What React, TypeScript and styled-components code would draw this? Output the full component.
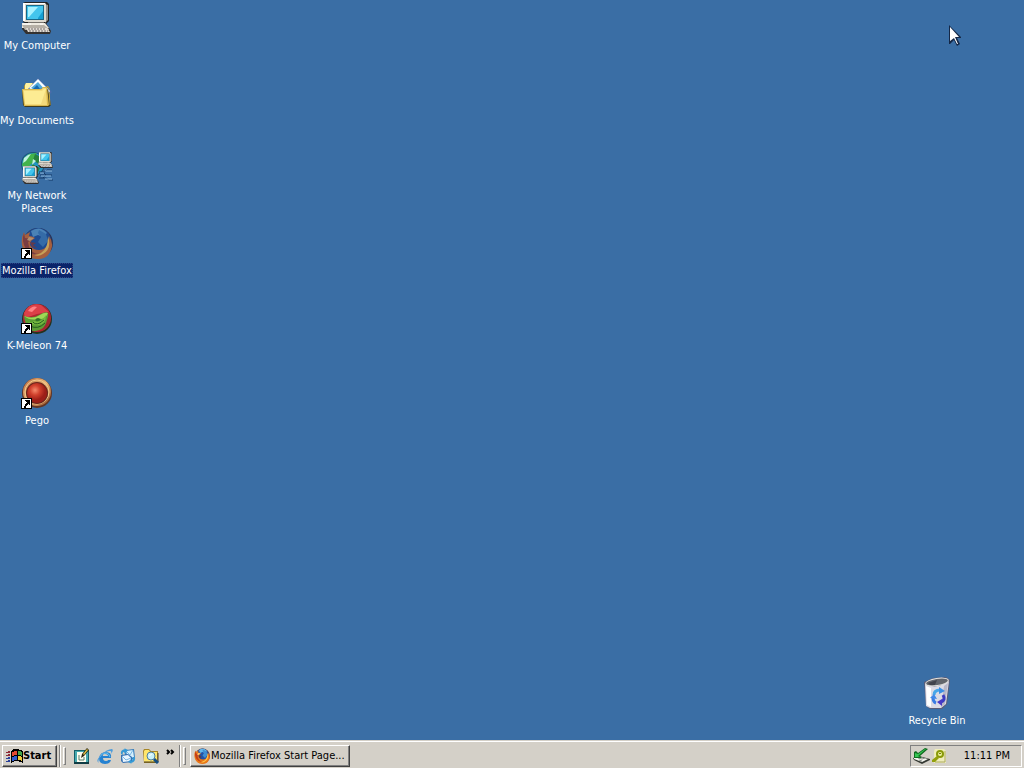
import React from "react";
import styled, { createGlobalStyle, css } from "styled-components";

const face = "#d4d0c8";
const shadow = "#808080";

const GlobalStyle = createGlobalStyle`
  * { box-sizing: border-box; }
  html, body { margin: 0; padding: 0; }
  body {
    font-family: "DejaVu Sans Condensed", "DejaVu Sans", sans-serif;
    font-size: 11px;
    line-height: 13px;
    color: #000;
    background: #3a6ea5;
    overflow: hidden;
  }
`;

const Screen = styled.div`
  position: relative;
  display: flex;
  flex-direction: column;
  height: 100vh;
`;

const Desktop = styled.main`
  flex: 1;
  display: flex;
  justify-content: space-between;
  min-height: 0;
  padding-right: 50px;
`;

const IconColumn = styled.nav`
  display: grid;
  grid-auto-rows: 75px;
  align-content: start;
`;

const BinCorner = styled.div`
  align-self: flex-end;
  padding-bottom: 12px;
`;

const DesktopIcon = styled.button`
  display: flex;
  flex-direction: column;
  align-items: center;
  justify-content: flex-start;
  gap: 4px;
  width: 74px;
  padding: 2px 0 0;
  border: 0;
  background: none;
  font: inherit;
  color: #fff;
`;

const IconLabel = styled.span<{ $selected?: boolean }>`
  padding: 1px;
  white-space: pre;
  text-align: center;
  ${({ $selected }) => $selected && css`
    background: #0a246a;
    outline: 1px dotted #2c4484;
    outline-offset: -1px;
  `}
`;

const Taskbar = styled.footer`
  display: flex;
  align-items: center;
  height: 28px;
  padding: 2px 2px 0;
  background: ${face};
  border-top: 1px solid ${face};
  box-shadow: inset 0 1px #fff;
`;

const raised = css`
  border: 1px solid;
  border-color: #fff #404040 #404040 #fff;
  box-shadow: inset -1px -1px ${shadow};
`;

const BarButton = styled.button<{ $wide?: boolean }>`
  display: flex;
  align-items: center;
  gap: ${({ $wide }) => ($wide ? 1 : 0)}px;
  width: ${({ $wide }) => ($wide ? 160 : 55)}px;
  height: 22px;
  padding: 0 3px;
  background: ${face};
  color: #000;
  font: inherit;
  font-weight: ${({ $wide }) => ($wide ? 400 : 700)};
  white-space: nowrap;
  ${raised}
`;

const Divider = styled.span`
  width: 2px;
  height: 22px;
  border-left: 1px solid ${shadow};
  border-right: 1px solid #fff;
`;

const Grip = styled.span`
  width: 3px;
  height: 18px;
  margin: 0 4px 0 2px;
  border: 1px solid;
  border-color: #fff ${shadow} ${shadow} #fff;
`;

const QuickLaunch = styled.div`
  display: flex;
  align-items: center;
  gap: 7px;
  padding: 0 4px;
`;

const ToolButton = styled.button`
  display: flex;
  padding: 0;
  border: 0;
  background: none;
`;

const MoreButton = styled(ToolButton)`
  align-self: flex-start;
  margin: 6px 2px 0 0;
`;

const StartArea = styled.div`
  padding-right: 2px;
`;

const Tray = styled.div`
  display: flex;
  align-items: center;
  gap: 2px;
  height: 22px;
  margin-left: auto;
  padding: 0 11px 0 2px;
  border: 1px solid;
  border-color: ${shadow} #fff #fff ${shadow};
`;

const Clock = styled.time`
  padding-left: 16px;
  white-space: nowrap;
`;

const Pointer = styled.svg`
  position: absolute;
  top: 25px;
  right: 63px;
  pointer-events: none;
`;

function Shortcut() {
  return (
    <g shapeRendering="crispEdges">
      <path d="M0 21h11v11H0z" fill="#000" />
      <path d="M1 22h9v9H1z" fill="#fff" />
      <path d="M4 23h5v5H8v-1H7v1H6v1H5v2H3v-2h1v-2h1v-1h1v-1H5v-1H4z" fill="#000" />
    </g>
  );
}

function PcShape() {
  return (
    <g>
      <path d="M2 1l2-1h22l2 2v17l-3 3H5l-3-2z" fill="#222" />
      <path d="M24 2l3 1v15l-3 3z" fill="#938f88" />
      <path d="M2 1h22l1 1v18H4l-2-1z" fill="#ddd9cf" />
      <path d="M2 1h22v1H4v17H2z" fill="#fff" />
      <path d="M5 3h18v15H5z" fill="#186888" />
      <path d="M6 4h16v13H6z" fill="#43c5ed" />
      <path d="M7 5h10L8 15H7z" fill="#a8f2ff" />
      <path d="M17 16l5-7v8h-5z" fill="#159fd3" />
      <path d="M7 20h16v3H7z" fill="#77736d" />
      <path d="M1 21h24l5 8-1 3H5l-4-5z" fill="#34312f" />
      <path d="M1 21h23l4 5H1z" fill="#eeeae0" />
      <path d="M1 23h22l5 4v1H4z" fill="#b6b0a6" />
      <path d="M5 26h21l3 4H7z" fill="#e1dcd4" />
      <path d="M7 27h18M8 29h19" stroke="#746d6c" strokeDasharray="2 1" />
      <path d="M2 22h8M19 22h3" stroke="#fff" />
    </g>
  );
}

function ComputerIcon() {
  return <svg width="32" height="32" viewBox="0 0 32 32"><PcShape /></svg>;
}

function DocumentsIcon() {
  return (
    <svg width="32" height="32" viewBox="0 0 32 32">
      <path d="M3 9l2-3h7l2 3h13l2 3v17H4z" fill="#b79832" />
      <path d="M4 8l1-2h6l2 3v6H4z" fill="#fff2a0" />
      <path d="M7 12L17 1l14 14-6 6z" fill="#496caa" />
      <path d="M8 11l9-9 12 12-5 6z" fill="#f8fdff" />
      <path d="M10 11l7-6 8 9-3 3z" fill="#50a8db" />
      <path d="M12 12l4-4 3 4 2-1 3 3-3 2z" fill="#1669ae" />
      <path d="M1 13h24l2-1 3 16-2 2H4l-2-2z" fill="#413b1b" />
      <path d="M1 12h19l2-2h4l2 18-1 1H3z" fill="#d9b84d" />
      <path d="M2 13h18l2-2h3l1 17H4z" fill="#f4da7b" />
      <path d="M3 14h18l2-2h2l-5 15H4z" fill="#fff09a" opacity=".8" />
      <path d="M28 15l1 13" stroke="#c8a947" />
    </svg>
  );
}

function NetworkIcon() {
  return (
    <svg width="32" height="32" viewBox="0 0 32 32">
      <circle cx="12" cy="12" r="12" fill="#1d5275" />
      <circle cx="12" cy="12" r="11" fill="#2293c2" />
      <path d="M3 6l5-4 8-1-3 4 2 3-6 5-5 6-3-6z" fill="#43b34a" />
      <path d="M14 2l6 3-1 8-7-5zM11 12l8 4-3 6-6-3z" fill="#25823d" />
      <path d="M3 6l4-3 3-1-5 7-3 2zM12 7l3 2-4 4z" fill="#bff2e0" />
      <g transform="translate(17 0) scale(.5)"><PcShape /></g>
      <g transform="translate(1 14) scale(.56)"><PcShape /></g>
      <path d="M18 20h6l2-2h5M19 23h12M18 26h7l3 2h4M22 20l3 3-3 3" fill="none" stroke="#153a68" />
      <path d="M19 21h4M24 19h7M20 24h10M24 27h7" stroke="#8dbbe2" />
    </svg>
  );
}

function FirefoxArt({ dim = false }: { dim?: boolean }) {
  const orange = dim ? "#a55f3e" : "#e97818";
  const red = dim ? "#793d42" : "#c53d17";
  const gold = dim ? "#c6a158" : "#ffc54a";
  return (
    <g>
      <circle cx="17" cy="16" r="15" fill={dim ? "#2d3354" : "#8b3b18"} />
      <circle cx="17" cy="14" r="13" fill={dim ? "#1d4b91" : "#2053a8"} />
      <path d="M10 4q9-6 16 2l-4 4-5-2-5 2z" fill={dim ? "#4a82b6" : "#62b8ec"} />
      <path d="M18 3l7 4 2 7-5 6-5-5 3-5-3-4z" fill={dim ? "#346ba7" : "#3f8ed1"} />
      <path d="M3 5l1 3 5-3-1 4q3 0 6 2l-4 3-1 4q3 5 9 5 5 0 8-4 3-4 2-10 5 7 2 14-3 9-13 9-11 0-15-10Q-1 13 3 5z" fill={orange} />
      <path d="M3 6l1 5q4 0 7 2l-4 2 1 5q3 7 10 7-8 2-13-5Q0 14 3 6z" fill={red} />
      <path d="M27 9q4 13-5 18-4 3-9 1 9-1 12-8 2-4 2-11z" fill={gold} />
      <path d="M8 10l5 1-4 3-3-1z" fill={dim ? "#b08f70" : "#ffd078"} />
      <path d="M9 15l6 1-3 2 4 3-5-1z" fill={dim ? "#653a4a" : "#7e3020"} />
    </g>
  );
}

function MozillaIcon() {
  return <svg width="32" height="32" viewBox="0 0 32 32"><FirefoxArt dim /><Shortcut /></svg>;
}

function MeleonIcon() {
  return (
    <svg width="32" height="32" viewBox="0 0 32 32">
      <circle cx="16" cy="17" r="15" fill="#24331d" />
      <circle cx="16" cy="16" r="14" fill="#ae2732" />
      <path d="M3 11Q8 0 20 3l8 7-12 2-12 4z" fill="#dc4048" />
      <path d="M7 9q4-6 9-4l-5 5z" fill="#ff8183" />
      <path d="M3 14q8 3 15-1 6-4 9-2 2 9-5 15-8 6-14 1-4-5-5-13z" fill="#5b9e35" />
      <path d="M3 14q9 4 16-1 5-3 8-2-3 7-10 6Q9 19 3 14z" fill="#9fd755" />
      <path d="M5 19q5 3 8 0 4 2 8-1l4-5q0 9-7 10-8 0-13-4z" fill="#78bb40" />
      <path d="M12 20q2 3 7 1l4-3M9 24q8 4 15-3" fill="none" stroke="#245d20" strokeWidth="1" />
      <path d="M17 16q-4 1-2 3 3 1 5-2z" fill="#317328" />
      <path d="M28 11q4 13-8 18 5-6 6-11z" fill="#9f2830" />
      <Shortcut />
    </svg>
  );
}

function PegoIcon() {
  return (
    <svg width="32" height="32" viewBox="0 0 32 32">
      <defs>
        <radialGradient id="pegoRed" cx="40%" cy="36%">
          <stop stopColor="#f58a6c" /><stop offset=".5" stopColor="#d0402c" /><stop offset="1" stopColor="#9c1f18" />
        </radialGradient>
        <linearGradient id="pegoRing" x1="0" y1="0" x2="1" y2="1">
          <stop stopColor="#b86b42" /><stop offset=".5" stopColor="#eab779" /><stop offset="1" stopColor="#8b4422" />
        </linearGradient>
      </defs>
      <circle cx="16" cy="16" r="15" fill="#633624" />
      <circle cx="16" cy="15" r="14" fill="url(#pegoRing)" />
      <circle cx="16" cy="15" r="12" fill="none" stroke="#f4ca8a" strokeWidth="1" />
      <circle cx="16" cy="16" r="11" fill="#6b251b" />
      <circle cx="16" cy="16" r="10" fill="url(#pegoRed)" />
      <Shortcut />
    </svg>
  );
}

function BinIcon() {
  return (
    <svg width="32" height="32" viewBox="0 0 32 32">
      <path d="M3 5l9-4 13-1 4 3-3 24-5 5H9l-4-3z" fill="#5b5d77" />
      <path d="M4 7q11 6 24-3l-3 23-5 4H9l-4-2z" fill="#dcdbe5" />
      <path d="M5 9l5 2v19l-4-2z" fill="#fff" />
      <path d="M23 9l4-3-3 21-4 4z" fill="#b9b8c9" />
      <ellipse cx="16" cy="5" rx="12" ry="4" transform="rotate(-9 16 5)" fill="#e4e3df" />
      <ellipse cx="16" cy="5" rx="11" ry="3" transform="rotate(-9 16 5)" fill="#62656c" />
      <path d="M7 6l9-3-2 5H9z" fill="#41434b" />
      <path d="M13 18q0-5 6-5" fill="none" stroke="#48a7e9" strokeWidth="3" />
      <path d="M18 10l6 4-6 3z" fill="#3b8fe5" />
      <path d="M22 18q3 5-2 7" fill="none" stroke="#3c3ac3" strokeWidth="3" />
      <path d="M21 22v7l-5-4z" fill="#4938c5" />
      <path d="M12 20q0 5 3 6" fill="none" stroke="#3a7ce4" strokeWidth="3" />
      <path d="M9 21l4-4 3 5z" fill="#4289e8" />
    </svg>
  );
}

function WindowsLogo() {
  return (
    <svg width="17" height="16" viewBox="0 0 17 16" shapeRendering="crispEdges">
      <path d="M5 3l3-2h4l5 2v12l-5-2H9l-4 2z" fill="#000" />
      <path d="M6 4l3-1h2v4H9L6 8z" fill="#e44a32" />
      <path d="M12 3h1l3 1v4l-3-1h-1z" fill="#42a64a" />
      <path d="M6 9l3-1h2v4H9l-3 1z" fill="#315ed0" />
      <path d="M12 8h1l3 1v4l-3-1h-1z" fill="#f2ca38" />
      <path d="M0 4h2v1H0zM2 3h2v2H2zM0 7h2v1H0zM2 6h2v2H2z" fill="#8e2934" />
      <path d="M0 10h2v1H0zM2 9h2v2H2zM0 13h2v1H0zM2 12h2v2H2z" fill="#283f9a" />
    </svg>
  );
}

function ShowDesktopIcon() {
  return (
    <svg width="16" height="16" viewBox="0 0 16 16">
      <path d="M0 2h15v14H0z" fill="#155f68" />
      <path d="M1 3h13v11H1z" fill="#48aab0" />
      <path d="M3 4h9v10H3z" fill="#fffef0" />
      <path d="M5 7v5h5V9" fill="none" stroke="#557c6c" />
      <path d="M7 10l1-4 5-6 2 2-5 6z" fill="#28240e" />
      <path d="M9 6l4-5 1 1-4 5z" fill="#e3c548" />
      <path d="M0 15h15" stroke="#0c1a20" />
    </svg>
  );
}

function ExplorerIcon() {
  return (
    <svg width="16" height="16" viewBox="0 0 16 16">
      <path d="M14 10H6q0 3 3 3 2 0 2-1h3q-1 4-6 4-6 0-6-6 1-6 7-6 6 0 5 6zM6 8h5q0-2-3-2T6 8z" fill="#2682d1" fillRule="evenodd" />
      <path d="M3 9q1-4 6-4 3 0 4 4" fill="none" stroke="#68c6f3" />
      <path d="M2 15Q-2 13 4 7q6-6 11-6 2 1-1 5 1-3-1-3-4 0-9 5-4 5-2 7z" fill="#4c9cdc" />
    </svg>
  );
}

function OutlookIcon() {
  return (
    <svg width="16" height="16" viewBox="0 0 16 16">
      <path d="M6 2l8-1 1 9-6 3-5-3z" fill="#337cbc" />
      <path d="M6 3l7-1 1 7-6 2z" fill="#d4effc" />
      <path d="M1 7l7-1 4 3v5l-9 1-2-2z" fill="#3772b4" />
      <path d="M2 8l6-1 3 3v3l-8 1z" fill="#e8f5ff" />
      <path d="M2 8l4 4 5-2M6 3l4 4 3-5" fill="none" stroke="#79b7e4" />
      <path d="M1 6Q0 2 5 1L4 0l4 2-3 4-1-2Q2 4 3 7zM15 9q1 5-4 6l1 1-4-2 3-3v2q2-1 2-4z" fill="#3599d5" />
    </svg>
  );
}

function SearchIcon() {
  return (
    <svg width="16" height="16" viewBox="0 0 16 16">
      <path d="M0 3l1-2h5l2 2h7v12H1z" fill="#a78627" />
      <path d="M1 3l1-1h4l1 2h7v10H1z" fill="#ffe66b" />
      <path d="M1 14h14V5" fill="none" stroke="#463e25" />
      <path d="M10 10l5 5" stroke="#154f83" strokeWidth="3" />
      <circle cx="8" cy="8" r="4" fill="#c8f1fa" stroke="#507e9a" />
      <path d="M6 8l3-2" stroke="#fff" />
    </svg>
  );
}

function NetworkTrayIcon() {
  return (
    <svg width="17" height="16" viewBox="0 0 17 16">
      <path d="M0 10l6-2 11 3v1l-8 4-8-4z" fill="#343832" />
      <path d="M1 10l6-1 8 2-6 3-8-3z" fill="#f4f5ee" />
      <path d="M5 10l4 1 3-1M6 12l3 1" fill="none" stroke="#8a908a" />
      <path d="M1 4l2-1 2 2 7-5 3 1-8 7 2 2H1z" fill="#116a20" />
      <path d="M2 5l3 1 7-5h1L5 8l2 1H2z" fill="#35c553" />
    </svg>
  );
}

function KeyTrayIcon() {
  return (
    <svg width="14" height="16" viewBox="0 0 14 16">
      <path d="M3 1h9l2 2v12H2V3z" fill="#efedbb" />
      <path d="M13 3v11H3" fill="none" stroke="#aaa85e" />
      <circle cx="8" cy="6" r="4" fill="#8a9a09" />
      <circle cx="8" cy="6" r="2" fill="#edf09a" />
      <path d="M5 8l2 2-4 4H0v-2z" fill="#93a00c" />
      <path d="M7 5h2v1H7z" fill="#717b10" />
    </svg>
  );
}

const desktopItems = [
  { name: "My Computer", Icon: ComputerIcon },
  { name: "My Documents", Icon: DocumentsIcon },
  { name: "My Network\nPlaces", Icon: NetworkIcon },
  { name: "Mozilla Firefox", Icon: MozillaIcon, selected: true },
  { name: "K-Meleon 74", Icon: MeleonIcon },
  { name: "Pego", Icon: PegoIcon },
];

const launchers = [
  { name: "Show Desktop", Icon: ShowDesktopIcon },
  { name: "Internet Explorer", Icon: ExplorerIcon },
  { name: "Outlook Express", Icon: OutlookIcon },
  { name: "Search", Icon: SearchIcon },
];

export default function App() {
  return (
    <Screen>
      <GlobalStyle />
      <Desktop>
        <IconColumn aria-label="Desktop">
          {desktopItems.map(({ name, Icon, selected }) => (
            <DesktopIcon key={name}>
              <Icon />
              <IconLabel $selected={selected}>{name}</IconLabel>
            </DesktopIcon>
          ))}
        </IconColumn>
        <BinCorner>
          <DesktopIcon>
            <BinIcon />
            <IconLabel>Recycle Bin</IconLabel>
          </DesktopIcon>
        </BinCorner>
      </Desktop>
      <Taskbar>
        <StartArea>
          <BarButton><WindowsLogo />Start</BarButton>
        </StartArea>
        <Divider />
        <Grip />
        <QuickLaunch>
          {launchers.map(({ name, Icon }) => (
            <ToolButton key={name} aria-label={name}><Icon /></ToolButton>
          ))}
        </QuickLaunch>
        <MoreButton aria-label="More">
          <svg width="14" height="7" viewBox="0 0 14 7">
            <path d="M4 1l2 2-2 2M8 1l2 2-2 2" fill="none" stroke="#000" strokeWidth="2" />
          </svg>
        </MoreButton>
        <Divider />
        <Grip />
        <BarButton $wide>
          <svg width="16" height="16" viewBox="0 0 32 32"><FirefoxArt /></svg>
          Mozilla Firefox Start Page...
        </BarButton>
        <Tray>
          <NetworkTrayIcon />
          <KeyTrayIcon />
          <Clock>11:11 PM</Clock>
        </Tray>
      </Taskbar>
      <Pointer width="12" height="21" viewBox="0 0 12 21">
        <path d="M0 0l12 12v1H8l3 6-3 2-3-6-4 4H0z" fill="#142746" />
        <path d="M1 2l9 10H6l3 7H8l-3-6-4 3z" fill="#fff" />
      </Pointer>
    </Screen>
  );
}
